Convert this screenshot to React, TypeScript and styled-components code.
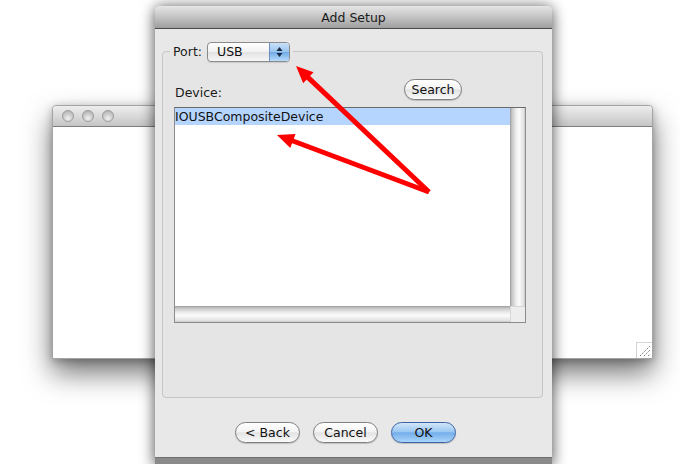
import React from "react";
import styled, { createGlobalStyle } from "styled-components";

const FONT = `"DejaVu Sans", "Liberation Sans", Arial, sans-serif`;

const Global = createGlobalStyle`
  html, body { margin: 0; padding: 0; background: #ffffff; }
  body { font-family: ${FONT}; font-size: 12.5px; color: #1a1a1a; }
`;

const Desktop = styled.div`
  position: relative;
  width: 680px;
  height: 464px;
  overflow: hidden;
  background: #ffffff;
`;

const BackWindow = styled.div`
  position: absolute;
  left: 52px;
  top: 105px;
  width: 601px;
  height: 254px;
  display: flex;
  flex-direction: column;
  border: 1px solid #a4a4a4;
  border-radius: 4px 4px 0 0;
  box-sizing: border-box;
  background: #ffffff;
  box-shadow: 0 14px 28px rgba(0, 0, 0, 0.55), 0 2px 8px rgba(0, 0, 0, 0.25);
`;

const BackTitle = styled.div`
  height: 20px;
  display: flex;
  align-items: center;
  gap: 8px;
  padding-left: 9px;
  background: linear-gradient(#ededed, #d8d8d8 55%, #c4c4c4);
  border-bottom: 1px solid #7e7e7e;
  border-radius: 4px 4px 0 0;
`;

const Light = styled.span`
  width: 12px;
  height: 12px;
  border-radius: 50%;
  background: radial-gradient(circle at 50% 75%, #f2f2f2 0%, #cfcfcf 45%, #a9a9a9 100%);
  border: 1px solid #9c9c9c;
  box-sizing: border-box;
`;

const BackBody = styled.div`
  flex: 1;
  display: flex;
  align-items: flex-end;
  justify-content: flex-end;
`;

const Grip = styled.div`
  width: 15px;
  height: 15px;
  border-left: 1px solid #d4d4d4;
  border-top: 1px solid #d4d4d4;
  display: flex;
`;

const Dialog = styled.div`
  position: absolute;
  left: 155px;
  top: 6px;
  width: 397px;
  height: 458px;
  display: flex;
  flex-direction: column;
  background: #e8e8e8;
  border-radius: 5px 5px 0 0;
  box-shadow: 0 0 14px rgba(0, 0, 0, 0.5), 0 6px 16px rgba(0, 0, 0, 0.3);
`;

const DialogTitle = styled.div`
  height: 22px;
  display: flex;
  align-items: center;
  justify-content: center;
  background: linear-gradient(#e6e6e6, #c4c4c4 50%, #9e9e9e);
  border-bottom: 1px solid #4a4a4a;
  border-radius: 5px 5px 0 0;
  color: #1a1a1a;
  font-size: 12.5px;
`;

const DialogBody = styled.div`
  flex: 1;
  display: flex;
  flex-direction: column;
  padding: 12px 9px 0 7px;
`;

const Group = styled.fieldset`
  margin: 0;
  padding: 0;
  height: 357px;
  box-sizing: border-box;
  border: 1px solid #c6c6c6;
  border-radius: 4px;
  background: #e5e5e5;
  min-width: 0;
`;

const Legend = styled.legend`
  margin-left: 7px;
  padding: 0 3px;
  display: flex;
  align-items: center;
  gap: 5px;
  height: 21px;
`;

const Label = styled.span`
  font-size: 12.5px;
  color: #1a1a1a;
`;

const Popup = styled.div`
  width: 83px;
  height: 20px;
  box-sizing: border-box;
  display: flex;
  border: 1px solid #8c8c8c;
  border-radius: 4px;
  overflow: hidden;
  background: linear-gradient(#ffffff, #f1f1f1 50%, #e2e2e2 51%, #f7f7f7);
  box-shadow: 0 1px 1px rgba(0, 0, 0, 0.12);
`;

const PopupText = styled.span`
  flex: 1;
  padding-left: 9px;
  line-height: 18px;
  font-size: 12.5px;
  color: #111;
`;

const PopupArrows = styled.span`
  width: 19px;
  display: flex;
  align-items: center;
  justify-content: center;
  border-left: 1px solid #6b8fc0;
  background: linear-gradient(#c9e1f7, #9ac4ee 50%, #6faae6 51%, #b8dcfb);
`;

const GroupContent = styled.div`
  display: flex;
  flex-direction: column;
  padding: 17px 16px 0 11px;
`;

const DeviceRow = styled.div`
  display: flex;
  align-items: flex-end;
  justify-content: space-between;
  padding-right: 64px;
  height: 21px;
`;

const DeviceLabel = styled.span`
  font-size: 12.5px;
  line-height: 15px;
  padding-left: 1px;
  color: #1a1a1a;
`;

const PillButton = styled.button<{ $primary?: boolean; $w: number }>`
  width: ${(p) => p.$w}px;
  height: 21px;
  padding: 0;
  box-sizing: border-box;
  border-radius: 11px;
  font-family: ${FONT};
  font-size: 12.5px;
  color: #111;
  border: 1px solid ${(p) => (p.$primary ? "#3d63a3" : "#7f7f7f")};
  background: ${(p) =>
    p.$primary
      ? "linear-gradient(#d2e6fa, #9cc8f2 45%, #74aeea 52%, #a9d5fb)"
      : "linear-gradient(#ffffff, #f3f3f3 45%, #e3e3e3 52%, #fafafa)"};
  box-shadow: 0 1px 1px rgba(0, 0, 0, 0.18);
`;

const ListBox = styled.div`
  margin-top: 7px;
  height: 216px;
  box-sizing: border-box;
  border: 1px solid #8c8c8c;
  border-top-color: #6a6a6a;
  background: #ffffff;
  display: grid;
  grid-template-columns: 1fr 15px;
  grid-template-rows: 1fr 16px;
`;

const Rows = styled.div`
  display: flex;
  flex-direction: column;
  overflow: hidden;
`;

const Row = styled.div<{ $selected?: boolean }>`
  height: 17px;
  line-height: 17px;
  font-size: 12.5px;
  color: #111;
  background: ${(p) => (p.$selected ? "#b5d5ff" : "transparent")};
  white-space: nowrap;
`;

const VScroll = styled.div`
  background: linear-gradient(to right, #9a9a9a, #c4c4c4 12%, #ececec 40%, #fbfbfb 60%, #e2e2e2 90%, #c6c6c6);
`;

const HScroll = styled.div`
  background: linear-gradient(#9a9a9a, #c4c4c4 12%, #ececec 40%, #fbfbfb 60%, #e2e2e2 90%, #c6c6c6);
`;

const Corner = styled.div`
  background: #ededed;
  border-left: 1px solid #d6d6d6;
  border-top: 1px solid #d6d6d6;
`;

const ButtonRow = styled.div`
  display: flex;
  gap: 13px;
  padding: 24px 0 0 73px;
`;

const BottomEdge = styled.div`
  height: 6px;
  background: #8a8a8a;
  border-top: 1px solid #6f6f6f;
`;

const Arrows = styled.svg`
  position: absolute;
  left: 0;
  top: 0;
  pointer-events: none;
`;

function arrow(x1: number, y1: number, x2: number, y2: number) {
  const dx = x2 - x1;
  const dy = y2 - y1;
  const len = Math.hypot(dx, dy);
  const ux = dx / len;
  const uy = dy / len;
  const headLen = 17;
  const headW = 7.5;
  const bx = x2 - ux * headLen;
  const by = y2 - uy * headLen;
  const px = -uy;
  const py = ux;
  const pts = `${x2},${y2} ${bx + px * headW},${by + py * headW} ${bx - px * headW},${by - py * headW}`;
  return { line: { x1, y1, x2: bx + ux * 2, y2: by + uy * 2 }, pts };
}

export default function App() {
  const a1 = arrow(429, 192, 296, 66);
  const a2 = arrow(429, 192, 277, 135);
  return (
    <>
      <Global />
      <Desktop>
        <BackWindow>
          <BackTitle>
            <Light />
            <Light />
            <Light />
          </BackTitle>
          <BackBody>
            <Grip>
              <svg width="14" height="14" viewBox="0 0 14 14">
                <g stroke="#7a7a7a" strokeWidth="1" strokeDasharray="1.5 1">
                  <line x1="3" y1="13" x2="13" y2="3" />
                  <line x1="7" y1="13" x2="13" y2="7" />
                  <line x1="11" y1="13" x2="13" y2="11" />
                </g>
              </svg>
            </Grip>
          </BackBody>
        </BackWindow>

        <Dialog>
          <DialogTitle>Add Setup</DialogTitle>
          <DialogBody>
            <Group>
              <Legend>
                <Label>Port:</Label>
                <Popup>
                  <PopupText>USB</PopupText>
                  <PopupArrows>
                    <svg width="7" height="12" viewBox="0 0 7 12">
                      <path d="M3.5 1 L6.5 5 L0.5 5 Z" fill="#1a2a44" />
                      <path d="M3.5 11 L6.5 7 L0.5 7 Z" fill="#1a2a44" />
                    </svg>
                  </PopupArrows>
                </Popup>
              </Legend>
              <GroupContent>
                <DeviceRow>
                  <DeviceLabel>Device:</DeviceLabel>
                  <PillButton $w={58}>Search</PillButton>
                </DeviceRow>
                <ListBox>
                  <Rows>
                    <Row $selected>IOUSBCompositeDevice</Row>
                  </Rows>
                  <VScroll />
                  <HScroll />
                  <Corner />
                </ListBox>
              </GroupContent>
            </Group>
            <ButtonRow>
              <PillButton $w={65}>&lt; Back</PillButton>
              <PillButton $w={65}>Cancel</PillButton>
              <PillButton $w={65} $primary>
                OK
              </PillButton>
            </ButtonRow>
          </DialogBody>
          <BottomEdge />
        </Dialog>

        <Arrows width="680" height="464" viewBox="0 0 680 464">
          <g stroke="#ff0000" strokeWidth="5" strokeLinecap="butt">
            <line {...a1.line} />
            <line {...a2.line} />
          </g>
          <polygon points={a1.pts} fill="#ff0000" />
          <polygon points={a2.pts} fill="#ff0000" />
        </Arrows>
      </Desktop>
    </>
  );
}
